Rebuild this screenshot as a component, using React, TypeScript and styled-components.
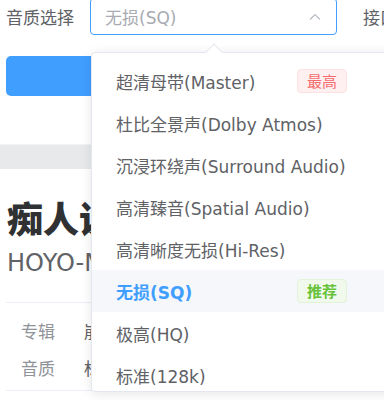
import styled, { createGlobalStyle } from "styled-components";

interface QualityOption {
   label: string;
   tag?: string;
   tagType?: "danger" | "success";
}

const options: QualityOption[] = [
   { label: "超清母带(Master)", tag: "最高", tagType: "danger" },
   { label: "杜比全景声(Dolby Atmos)" },
   { label: "沉浸环绕声(Surround Audio)" },
   { label: "高清臻音(Spatial Audio)" },
   { label: "高清晰度无损(Hi-Res)" },
   { label: "无损(SQ)", tag: "推荐", tagType: "success" },
   { label: "极高(HQ)" },
   { label: "标准(128k)" },
];

const selected = "无损(SQ)";

const App = () => {
   return (
      <>
         <GlobalStyle />
         <Page>
            <TopSection>
               <FormRow>
                  <FormLabel>音质选择</FormLabel>
                  <SelectWrap>
                     <SelectBox>
                        <Placeholder>{selected}</Placeholder>
                        <svg width="14" height="14" viewBox="0 0 14 14">
                           <polyline points="2,9.5 7,4.5 12,9.5" fill="none" stroke="#b8bcc4" strokeWidth="1.2" />
                        </svg>
                     </SelectBox>

                     {/* 드롭다운 */}
                     <Dropdown>
                        <Arrow />
                        <OptionList>
                           {options.map((opt) => (
                              <OptionItem key={opt.label} $active={opt.label === selected}>
                                 <OptionText>{opt.label}</OptionText>
                                 {opt.tag && <Tag $type={opt.tagType}>{opt.tag}</Tag>}
                              </OptionItem>
                           ))}
                        </OptionList>
                     </Dropdown>
                  </SelectWrap>
                  <SecondLabel>接口选择</SecondLabel>
               </FormRow>
               <ParseBtn>解析</ParseBtn>
            </TopSection>

            <Band />

            <ResultCard>
               <SongTitle>痴人说梦</SongTitle>
               <Artist>HOYO-MiX</Artist>
               <InfoTable>
                  <InfoRow>
                     <InfoLabel>专辑</InfoLabel>
                     <InfoValue>崩坏：星穹铁道</InfoValue>
                  </InfoRow>
                  <InfoRow>
                     <InfoLabel>音质</InfoLabel>
                     <InfoValue>标准(128k)</InfoValue>
                  </InfoRow>
               </InfoTable>
            </ResultCard>
         </Page>
      </>
   );
};

export default App;

const GlobalStyle = createGlobalStyle`
   * {
      box-sizing: border-box;
   }
   body {
      margin: 0;
      background: #ffffff;
      font-family: "DejaVu Sans", "Noto Sans CJK SC", sans-serif;
      overflow: hidden;
   }
`;

const Page = styled.div`
   width: 384px;
   height: 400px;
   overflow: hidden;
   display: flex;
   flex-direction: column;
`;

const TopSection = styled.div`
   padding: 0 6px;
   margin-top: -2px;
   height: 146px;
   display: flex;
   flex-direction: column;
   gap: 21px;
   position: relative;
   z-index: 2;
`;

const FormRow = styled.div`
   height: 37px;
   display: flex;
   flex-direction: row;
   align-items: center;
   white-space: nowrap;
`;

const FormLabel = styled.label`
   font-family: "Noto Sans CJK SC", sans-serif;
   font-size: 17px;
   color: #606266;
   margin-right: 16px;
`;

const SecondLabel = styled(FormLabel)`
   margin-left: 26px;
`;

const SelectWrap = styled.div`
   position: relative;
   width: 247px;
   height: 37px;
   flex-shrink: 0;
`;

const SelectBox = styled.div`
   width: 100%;
   height: 100%;
   border: 1px solid #409eff;
   border-radius: 4px;
   display: flex;
   align-items: center;
   justify-content: space-between;
   padding: 0 14px 0 14px;
`;

const Placeholder = styled.span`
   font-size: 17px;
   color: #a8abb2;
`;

////
const Dropdown = styled.div`
   position: absolute;
   top: 54px;
   left: 1px;
   width: 310px;
   height: 340px;
   background: white;
   border: 1px solid #e4e7ed;
   border-radius: 4px;
   box-shadow: 0 2px 12px rgba(0, 0, 0, 0.1);
`;

const Arrow = styled.div`
   position: absolute;
   top: -7px;
   left: 116px;
   width: 12px;
   height: 12px;
   background: white;
   border-left: 1px solid #e4e7ed;
   border-top: 1px solid #e4e7ed;
   transform: rotate(45deg);
`;

const OptionList = styled.ul`
   list-style: none;
   margin: 0;
   padding: 7px 0 0;
   height: 100%;
   overflow: hidden;
   position: relative;
`;

const OptionItem = styled.li<{ $active: boolean }>`
   height: 42px;
   display: flex;
   align-items: center;
   padding: 0 24px;
   font-size: 17px;
   color: ${(p) => (p.$active ? "#409eff" : "#606266")};
   font-weight: ${(p) => (p.$active ? 700 : 400)};
   background: ${(p) => (p.$active ? "#f5f7fa" : "transparent")};
   white-space: nowrap;
`;

const OptionText = styled.span`
   width: 181px;
   flex-shrink: 0;
`;

const Tag = styled.span<{ $type?: "danger" | "success" }>`
   height: 24px;
   line-height: 22px;
   padding: 0 9px;
   font-family: "Noto Sans CJK SC", sans-serif;
   font-size: 15px;
   border-radius: 4px;
   border: 1px solid ${(p) => (p.$type === "danger" ? "#fde2e2" : "#e1f3d8")};
   background: ${(p) => (p.$type === "danger" ? "#fef0f0" : "#f0f9eb")};
   color: ${(p) => (p.$type === "danger" ? "#f56c6c" : "#67c23a")};
`;

const ParseBtn = styled.button`
   width: 100%;
   height: 40px;
   border: none;
   border-radius: 5px;
   background-color: #409eff;
   color: white;
   font-size: 17px;
   font-family: "Noto Sans CJK SC", sans-serif;
`;

///
const Band = styled.div`
   height: 25px;
   flex-shrink: 0;
   background: #e8e9eb;
   border-top: 1px solid #f2f3f4;
`;

const ResultCard = styled.div`
   padding: 24px 6px 0;
   display: flex;
   flex-direction: column;
`;

const SongTitle = styled.div`
   font-family: "Noto Sans CJK SC", sans-serif;
   font-size: 36px;
   font-weight: 900;
   line-height: 48px;
   color: #303133;
   padding-left: 1px;
`;

const Artist = styled.div`
   font-size: 24px;
   line-height: 36px;
   color: #606266;
   margin-top: 4px;
   padding-left: 1px;
`;

const InfoTable = styled.div`
   margin-top: 21px;
   border-top: 1px solid #ebeef5;
   border-bottom: 1px solid #ebeef5;
   padding: 9px 0 4px;
`;

const InfoRow = styled.div`
   height: 37px;
   display: flex;
   align-items: center;
   font-family: "Noto Sans CJK SC", sans-serif;
   font-size: 17px;
`;

const InfoLabel = styled.span`
   width: 78px;
   padding-left: 15px;
   color: #909399;
`;

const InfoValue = styled.span`
   color: #606266;
`;
